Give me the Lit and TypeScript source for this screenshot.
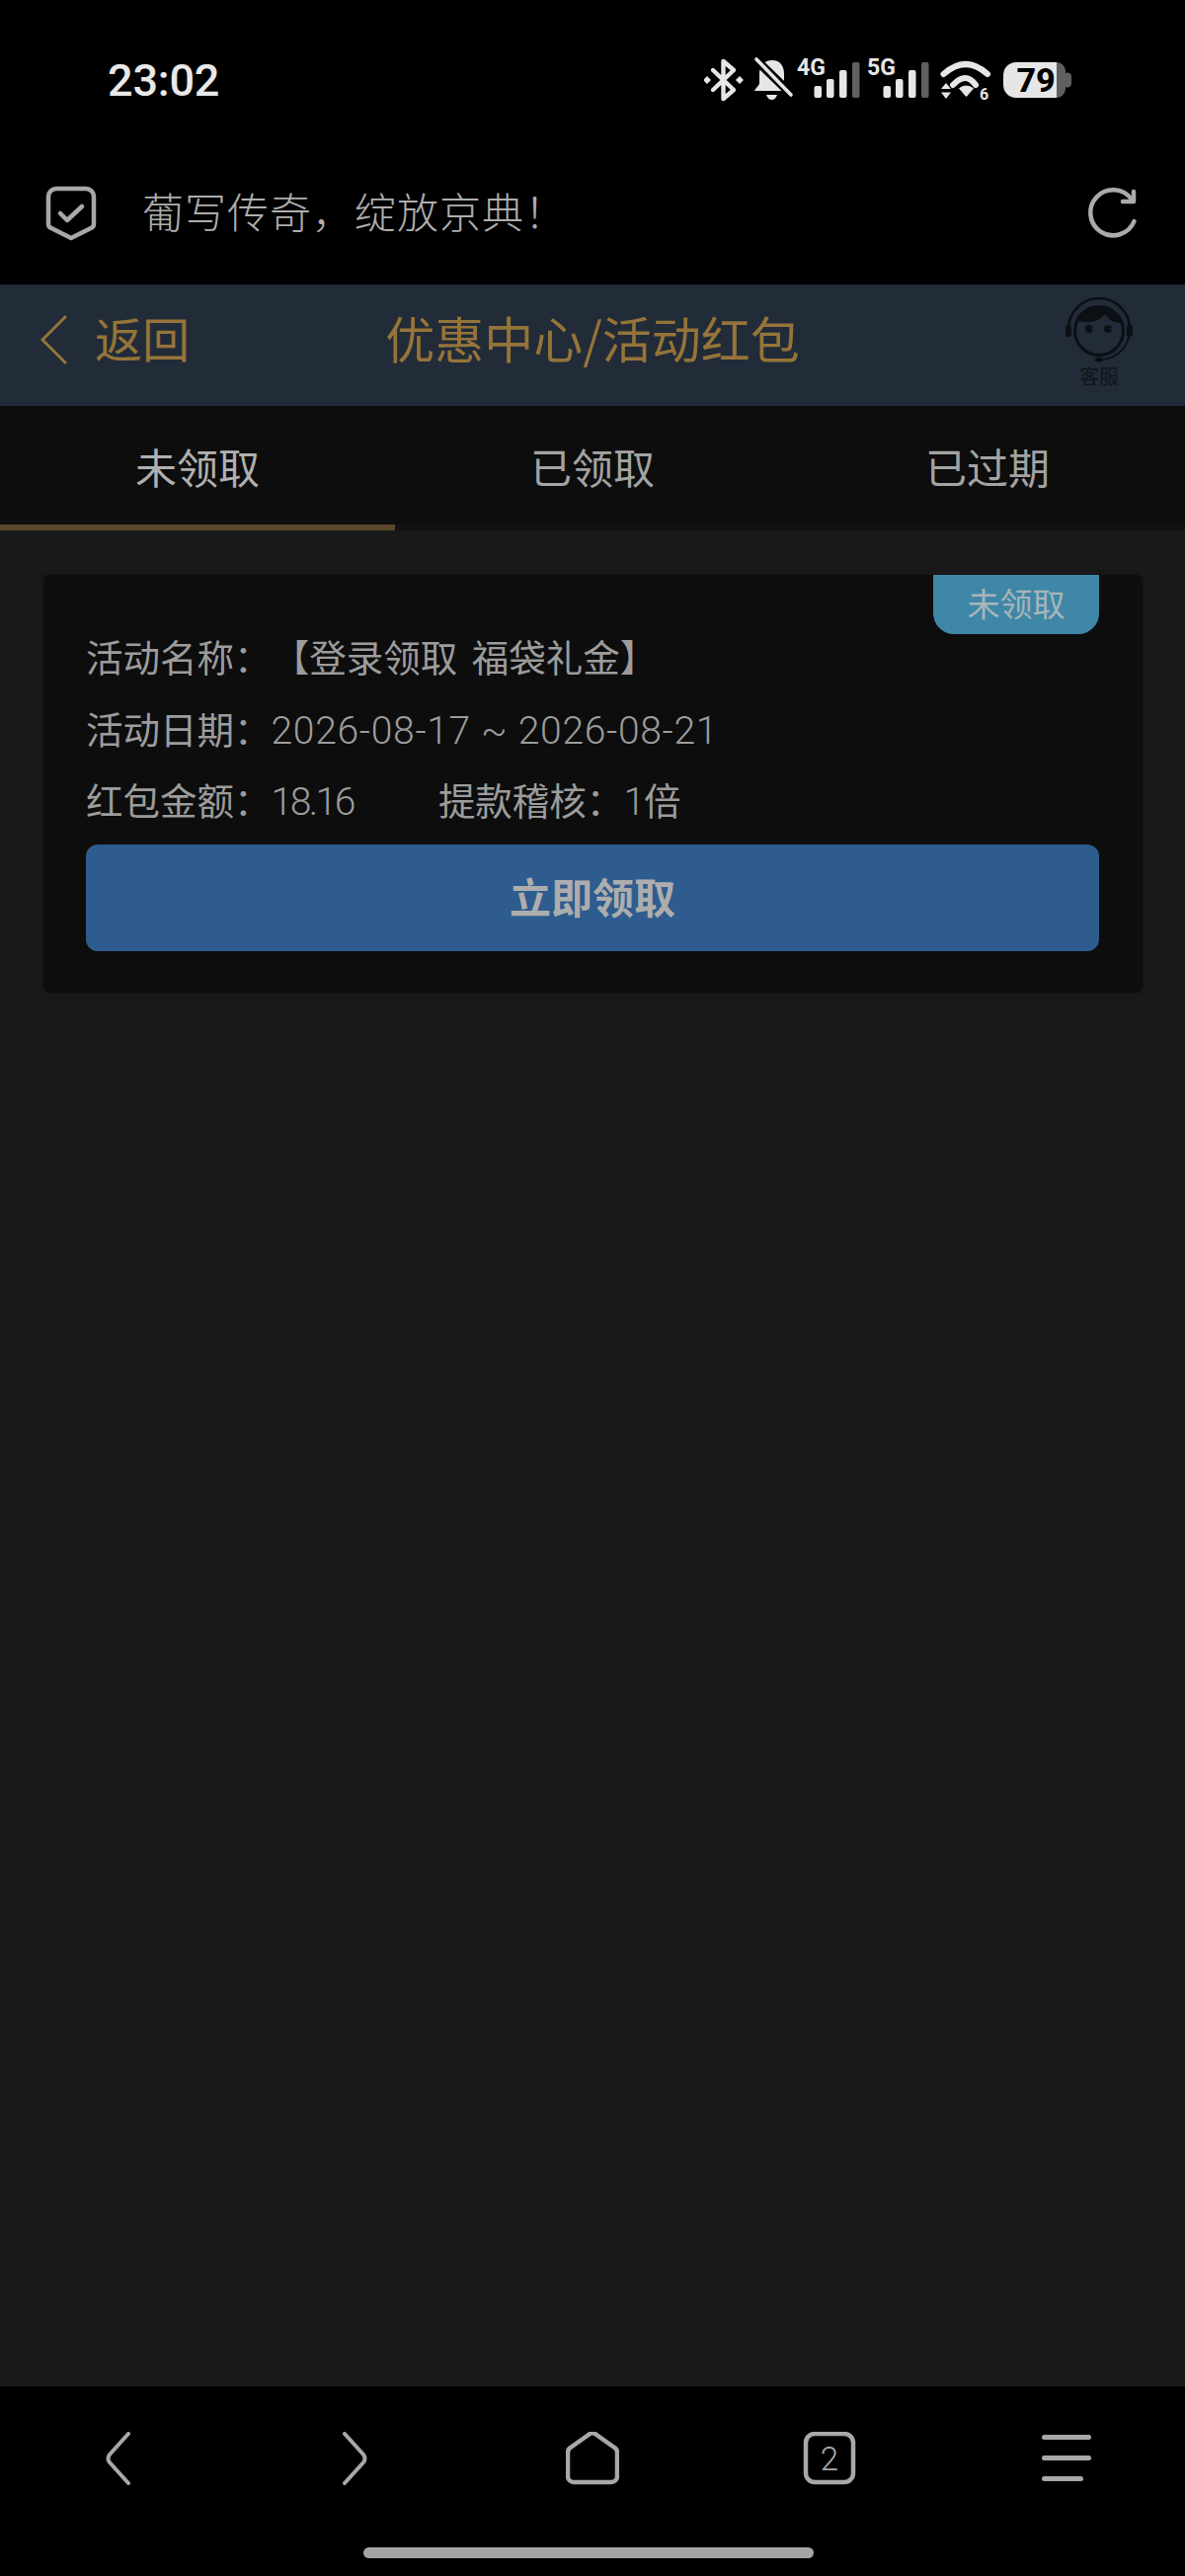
import { LitElement, html, css, svg } from "lit";
import { customElement } from "lit/decorators.js";

const statusIcons = svg`
  <g fill="#e6e6e6">
    <g fill="none" stroke="#e6e6e6" stroke-width="4.4" stroke-linejoin="round" stroke-linecap="round">
      <path d="M722 71 L743 91 L732.5 100 V62 L743 71 L722 91"/>
    </g>
    <path d="M716 77 l4 4 l-4 4 l-4 -4z M749 77 l4 4 l-4 4 l-4 -4z"/>
    <path d="M782 61 c8 0 12 6 12 14 v9 c0 3 3 5 4 8 h-34 c1 -3 5 -5 5 -8 v-9 c0 -8 5 -14 13 -14z"/>
    <path d="M776 96 h11 c-1 3 -3 5 -5.500 5 s-4.500 -2 -5.500 -5z"/>
    <path d="M765 60 L802 96" stroke="#000" stroke-width="9"/>
    <path d="M766 60 L801 96" stroke="#e6e6e6" stroke-width="3.600" stroke-linecap="round"/>
    <text class="net" x="807" y="75.500">4G</text>
    <rect x="824.500" y="87" width="7.500" height="12" rx="2"/>
    <rect x="837" y="80" width="7.500" height="19" rx="2"/>
    <rect x="850" y="71" width="7.500" height="28" rx="2"/>
    <rect x="863" y="63" width="7.500" height="36" rx="2" fill="#606060"/>
    <text class="net" x="878" y="75.500">5G</text>
    <rect x="894.500" y="87" width="7.500" height="12" rx="2"/>
    <rect x="907" y="80" width="7.500" height="19" rx="2"/>
    <rect x="920" y="71" width="7.500" height="28" rx="2"/>
    <rect x="933" y="63" width="7.500" height="36" rx="2" fill="#606060"/>
    <path d="M955.500 75 Q978 55 1000 75 M965 86 Q978 72 988 86" fill="none" stroke="#e6e6e6" stroke-width="6" stroke-linecap="round"/>
    <path d="M971.500 89.500 Q978 84.500 985.500 89.500 L978.500 97.500z" stroke="#e6e6e6" stroke-width="1" stroke-linejoin="round"/>
    <path d="M958 84 l5 6 h-10z M958 100 l-5 -6.500 h10z"/>
    <text class="six" x="992" y="100.500">6</text>
    <path d="M1029 63 H1070 V99 H1029 a13 13 0 0 1 -13 -13 V76 a13 13 0 0 1 13 -13z"/>
    <path d="M1070 63 H1070 a9 9 0 0 1 9 9 V74 a4 4 0 0 1 6 4 V84 a4 4 0 0 1 -6 4 V90 a9 9 0 0 1 -9 9z" fill="#606060"/>
    <text class="batt" x="1049" y="93" text-anchor="middle">79</text>
  </g>`;

@customElement("app-root")
export class AppRoot extends LitElement {
  static styles = css`
    :host {
      display: flex;
      flex-direction: column;
      width: 1200px;
      height: 2608px;
      background: #191919;
      font-family: "Noto Sans CJK SC", "Noto Sans", sans-serif;
      overflow: hidden;
    }
    svg { display: block; }
    .status {
      box-sizing: border-box;
      height: 144px;
      padding: 18px 112px 0 109px;
      background: #000;
      display: flex;
      align-items: center;
      justify-content: space-between;
    }
    .time {
      font-family: Roboto, sans-serif;
      font-weight: 500;
      font-size: 45px;
      color: #e8e8e8;
      letter-spacing: -0.2px;
    }
    .net { font: 700 23px Roboto, sans-serif; }
    .six { font: 700 16px Roboto, sans-serif; }
    .batt { font: 800 34px Roboto, sans-serif; fill: #000; }
    .addr {
      box-sizing: border-box;
      height: 144px;
      background: #000;
      display: flex;
      align-items: center;
      padding: 0 46px 0 46px;
    }
    .addr-text {
      flex: 1;
      margin-left: 46px;
      padding-bottom: 8px;
      font-size: 42px;
      font-weight: 300;
      letter-spacing: 1px;
      color: #aeaeae;
      white-space: nowrap;
    }
    .head {
      box-sizing: border-box;
      height: 123px;
      background: #222b38;
      display: grid;
      grid-template-columns: 1fr auto 1fr;
      align-items: center;
      color: #957439;
    }
    .back {
      display: flex;
      align-items: center;
      padding-left: 41px;
      gap: 27px;
      font-size: 48px;
    }
    .back svg { margin-bottom: 12px; }
    .back span { padding-bottom: 18px; }
    .title { font-size: 50px; white-space: nowrap; padding-bottom: 18px; }
    .agent {
      justify-self: end;
      margin-right: 52px;
      width: 70px;
      display: flex;
      flex-direction: column;
      align-items: center;
      gap: 4px;
      color: #11151b;
      font-size: 20px;
      line-height: 20px;
      padding-bottom: 7px;
    }
    .tabs {
      display: grid;
      grid-template-columns: repeat(3, 1fr);
      height: 126px;
      background: #0d0d0d;
    }
    .tab {
      box-sizing: border-box;
      display: flex;
      align-items: center;
      justify-content: center;
      font-size: 42px;
      color: #a3a3a3;
      border-bottom: 6px solid #121212;
    }
    .tab.on { border-bottom-color: #5a472a; color: #b0b0b0; }
    .content { flex: 1; padding: 45px 43px 0 44px; }
    .card {
      position: relative;
      box-sizing: border-box;
      height: 423px;
      padding: 46px 44px 0 43px;
      background: #0d0d0d;
      border-radius: 6px;
      box-shadow: 0 0 4px rgba(0, 0, 0, 0.25);
      color: #9c9c9c;
      font-size: 37.5px;
    }
    .badge {
      position: absolute;
      top: 0;
      right: 44px;
      box-sizing: border-box;
      width: 168px;
      height: 60px;
      padding-bottom: 5px;
      display: flex;
      align-items: center;
      justify-content: center;
      background: #3f87a6;
      color: #a8b4ba;
      font-size: 33px;
      border-radius: 0 0 21px 21px;
    }
    .row { height: 72.500px; line-height: 72.500px; white-space: nowrap; }
    .name { margin-left: 20px; word-spacing: 6px; }
    .num {
      font-family: Roboto, "Noto Sans CJK SC", sans-serif;
      font-weight: 300;
      font-size: 39px;
      letter-spacing: 0.7px;
    }
    .num.tight { letter-spacing: -2.500px; }
    .num.one { letter-spacing: -1px; }
    .gap { margin-left: 86px; }
    .btn {
      box-sizing: border-box;
      margin-top: 9px;
      height: 108px;
      padding-bottom: 5px;
      display: flex;
      align-items: center;
      justify-content: center;
      background: #2e5c8e;
      border-radius: 12px;
      color: #adadad;
      font-size: 42px;
      font-weight: 700;
    }
    .bottom {
      position: relative;
      box-sizing: border-box;
      height: 192px;
      background: #000;
      padding-top: 46px;
      display: flex;
      flex-direction: column;
      align-items: center;
    }
    .nav {
      width: 100%;
      display: grid;
      grid-template-columns: repeat(5, 240px);
      justify-items: center;
    }
    .homebar {
      margin-top: 63px;
      margin-left: -8px;
      width: 456px;
      height: 11px;
      border-radius: 6px;
      background: #a5a5a5;
    }
    .count {
      font-family: Roboto, sans-serif;
      font-weight: 300;
      font-size: 33px;
      fill: #a8a8a8;
    }
  `;

  render() {
    const s = "#a8a8a8";
    return html`
      <div class="status">
        <div class="time">23:02</div>
        <svg width="375" height="60" viewBox="713 51 375 60">${statusIcons}</svg>
      </div>
      <div class="addr">
        <svg width="52" height="56" viewBox="0 0 52 56" fill="none" stroke="${s}" stroke-width="4.500" stroke-linejoin="round" stroke-linecap="round">
          <path d="M11 3 H41 a8 8 0 0 1 8 8 V39 q0 2.500 -2 3.500 L26 53 L5 42.500 q-2 -1 -2 -3.500 V11 a8 8 0 0 1 8 -8z"/>
          <path d="M15 28 L22 35 L37 21"/>
        </svg>
        <div class="addr-text">葡写传奇，绽放京典！</div>
        <svg width="56" height="54" viewBox="0 0 56 54" fill="none" stroke="#ababab" stroke-width="4.500" stroke-linecap="round" stroke-linejoin="round">
          <path d="M50.500 35 A23 23 0 1 1 48 13"/>
          <path d="M50 5 V15 H39"/>
        </svg>
      </div>
      <div class="head">
        <div class="back">
          <svg width="28" height="52" viewBox="0 0 28 52" fill="none" stroke="#957439" stroke-width="3">
            <path d="M26 2 L2 26 L26 50"/>
          </svg>
          <span>返回</span>
        </div>
        <div class="title">优惠中心/活动红包</div>
        <div class="agent">
          <svg width="70" height="66" viewBox="0 0 70 66" fill="#0c0f14">
            <circle cx="35" cy="34" r="24.500" fill="none" stroke="#0c0f14" stroke-width="3"/>
            <path d="M14 24 C18 14 26 9 35 9 C46 9 53 16 57 26 C50 26 44 22 41 17 C36 24 26 27 14 24z"/>
            <path d="M4 32 A31 31 0 0 1 66 32" fill="none" stroke="#0c0f14" stroke-width="2.500"/>
            <rect x="1" y="28" width="6" height="12" rx="3"/>
            <rect x="63" y="28" width="6" height="12" rx="3"/>
            <path d="M65 40 C62 54 50 62 38 63" fill="none" stroke="#0c0f14" stroke-width="1.800"/>
            <ellipse cx="35" cy="63" rx="4" ry="2.500"/>
            <circle cx="25" cy="32" r="4"/>
            <circle cx="44" cy="32" r="4"/>
            <circle cx="28" cy="32" r="1" fill="#222b38"/>
            <circle cx="47" cy="32" r="1" fill="#222b38"/>
          </svg>
          <span>客服</span>
        </div>
      </div>
      <div class="tabs">
        <div class="tab on">未领取</div>
        <div class="tab">已领取</div>
        <div class="tab">已过期</div>
      </div>
      <div class="content">
        <div class="card">
          <div class="badge">未领取</div>
          <div class="row">活动名称：<span class="name">【登录领取 福袋礼金】</span></div>
          <div class="row">活动日期：<span class="num">2026-08-17 ~ 2026-08-21</span></div>
          <div class="row">红包金额：<span class="num tight">18.16</span><span class="gap">提款稽核：</span><span class="num one">1</span>倍</div>
          <div class="btn">立即领取</div>
        </div>
      </div>
      <div class="bottom">
        <div class="nav">
          <svg width="54" height="54" viewBox="0 0 54 54" fill="none" stroke="${s}" stroke-width="4" stroke-linecap="round" stroke-linejoin="round">
            <path d="M37 2 L18 23 Q15 27 18 31 L37 52"/>
          </svg>
          <svg width="54" height="54" viewBox="0 0 54 54" fill="none" stroke="${s}" stroke-width="4" stroke-linecap="round" stroke-linejoin="round">
            <path d="M16 2 L35 23 Q38 27 35 31 L16 52"/>
          </svg>
          <svg width="54" height="54" viewBox="0 0 54 54" fill="none" stroke="${s}" stroke-width="4.500" stroke-linejoin="round">
            <path d="M8 51 H46 a6 6 0 0 0 6 -6 V21 a6 6 0 0 0 -2 -4.500 L31 3 a6 6 0 0 0 -8 0 L4 16.500 a6 6 0 0 0 -2 4.500 V45 a6 6 0 0 0 6 6z"/>
          </svg>
          <svg width="54" height="54" viewBox="0 0 54 54" fill="none" stroke="${s}" stroke-width="4.500">
            <rect x="3" y="2" width="48" height="49" rx="9"/>
            <text class="count" x="27" y="39" text-anchor="middle" stroke="none">2</text>
          </svg>
          <svg width="54" height="54" viewBox="0 0 54 54" fill="${s}">
            <rect x="2" y="3" width="50" height="5" rx="2.500"/>
            <rect x="2" y="24" width="50" height="5" rx="2.500"/>
            <rect x="2" y="45" width="42" height="5" rx="2.500"/>
          </svg>
        </div>
        <div class="homebar"></div>
      </div>
    `;
  }
}
